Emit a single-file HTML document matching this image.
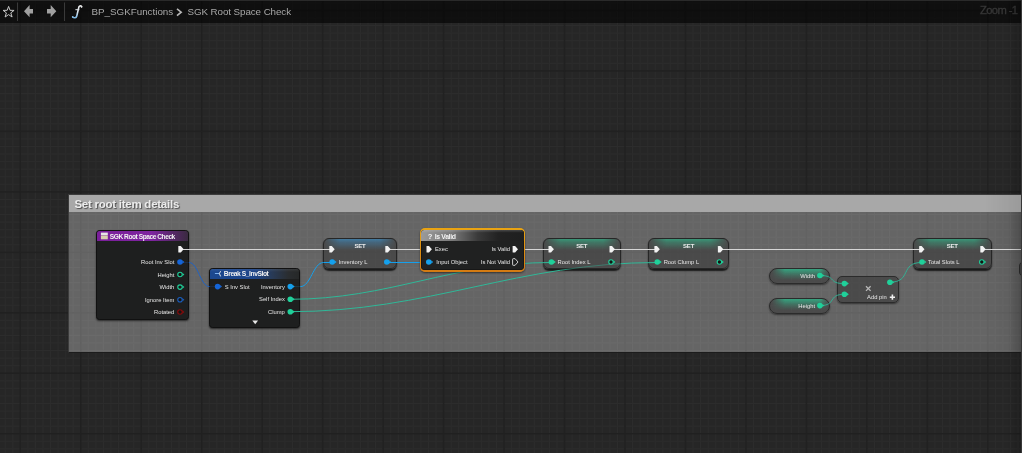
<!DOCTYPE html>
<html><head><meta charset="utf-8">
<style>
*{margin:0;padding:0;box-sizing:border-box}
html,body{width:1022px;height:453px;overflow:hidden}
body{position:relative;will-change:transform;font-family:"Liberation Sans",sans-serif;background:#262626;color:#ddd}
.topbar{position:absolute;left:0;top:0;width:1022px;height:23px;background:rgba(0,0,0,.6);border-top:1px solid #2a2a2a}
.comment{position:absolute;left:68px;top:193.6px;width:970px;height:159px;background:rgba(255,255,255,.295);border:1px solid #3c3c3c;border-bottom-color:#1c1c1c}
.comment .hdr{position:absolute;left:0;top:0;right:0;height:17px;background:#a8a8a8}
.comment .title{position:absolute;left:5.4px;top:3px;letter-spacing:-0.25px;font-size:11.5px;font-weight:bold;color:#ececec;text-shadow:1px 1px 1px rgba(0,0,0,.55);white-space:nowrap}
.b{position:absolute}
.t{position:absolute;white-space:nowrap;line-height:1}
</style></head><body>
<svg width="1022" height="453" style="position:absolute;left:0;top:0"><rect x="4.58" y="0" width="1.2" height="453" fill="#2c2c2c"/><rect x="12.14" y="0" width="1.2" height="453" fill="#2c2c2c"/><rect x="27.26" y="0" width="1.2" height="453" fill="#2c2c2c"/><rect x="34.82" y="0" width="1.2" height="453" fill="#2c2c2c"/><rect x="42.38" y="0" width="1.2" height="453" fill="#2c2c2c"/><rect x="49.93" y="0" width="1.2" height="453" fill="#2c2c2c"/><rect x="57.49" y="0" width="1.2" height="453" fill="#2c2c2c"/><rect x="65.05" y="0" width="1.2" height="453" fill="#2c2c2c"/><rect x="72.61" y="0" width="1.2" height="453" fill="#2c2c2c"/><rect x="87.73" y="0" width="1.2" height="453" fill="#2c2c2c"/><rect x="95.29" y="0" width="1.2" height="453" fill="#2c2c2c"/><rect x="102.85" y="0" width="1.2" height="453" fill="#2c2c2c"/><rect x="110.41" y="0" width="1.2" height="453" fill="#2c2c2c"/><rect x="117.96" y="0" width="1.2" height="453" fill="#2c2c2c"/><rect x="125.52" y="0" width="1.2" height="453" fill="#2c2c2c"/><rect x="133.08" y="0" width="1.2" height="453" fill="#2c2c2c"/><rect x="148.2" y="0" width="1.2" height="453" fill="#2c2c2c"/><rect x="155.76" y="0" width="1.2" height="453" fill="#2c2c2c"/><rect x="163.32" y="0" width="1.2" height="453" fill="#2c2c2c"/><rect x="170.88" y="0" width="1.2" height="453" fill="#2c2c2c"/><rect x="178.43" y="0" width="1.2" height="453" fill="#2c2c2c"/><rect x="185.99" y="0" width="1.2" height="453" fill="#2c2c2c"/><rect x="193.55" y="0" width="1.2" height="453" fill="#2c2c2c"/><rect x="208.67" y="0" width="1.2" height="453" fill="#2c2c2c"/><rect x="216.23" y="0" width="1.2" height="453" fill="#2c2c2c"/><rect x="223.79" y="0" width="1.2" height="453" fill="#2c2c2c"/><rect x="231.34" y="0" width="1.2" height="453" fill="#2c2c2c"/><rect x="238.9" y="0" width="1.2" height="453" fill="#2c2c2c"/><rect x="246.46" y="0" width="1.2" height="453" fill="#2c2c2c"/><rect x="254.02" y="0" width="1.2" height="453" fill="#2c2c2c"/><rect x="269.14" y="0" width="1.2" height="453" fill="#2c2c2c"/><rect x="276.7" y="0" width="1.2" height="453" fill="#2c2c2c"/><rect x="284.26" y="0" width="1.2" height="453" fill="#2c2c2c"/><rect x="291.81" y="0" width="1.2" height="453" fill="#2c2c2c"/><rect x="299.37" y="0" width="1.2" height="453" fill="#2c2c2c"/><rect x="306.93" y="0" width="1.2" height="453" fill="#2c2c2c"/><rect x="314.49" y="0" width="1.2" height="453" fill="#2c2c2c"/><rect x="329.61" y="0" width="1.2" height="453" fill="#2c2c2c"/><rect x="337.17" y="0" width="1.2" height="453" fill="#2c2c2c"/><rect x="344.73" y="0" width="1.2" height="453" fill="#2c2c2c"/><rect x="352.28" y="0" width="1.2" height="453" fill="#2c2c2c"/><rect x="359.84" y="0" width="1.2" height="453" fill="#2c2c2c"/><rect x="367.4" y="0" width="1.2" height="453" fill="#2c2c2c"/><rect x="374.96" y="0" width="1.2" height="453" fill="#2c2c2c"/><rect x="390.08" y="0" width="1.2" height="453" fill="#2c2c2c"/><rect x="397.64" y="0" width="1.2" height="453" fill="#2c2c2c"/><rect x="405.2" y="0" width="1.2" height="453" fill="#2c2c2c"/><rect x="412.75" y="0" width="1.2" height="453" fill="#2c2c2c"/><rect x="420.31" y="0" width="1.2" height="453" fill="#2c2c2c"/><rect x="427.87" y="0" width="1.2" height="453" fill="#2c2c2c"/><rect x="435.43" y="0" width="1.2" height="453" fill="#2c2c2c"/><rect x="450.55" y="0" width="1.2" height="453" fill="#2c2c2c"/><rect x="458.11" y="0" width="1.2" height="453" fill="#2c2c2c"/><rect x="465.67" y="0" width="1.2" height="453" fill="#2c2c2c"/><rect x="473.22" y="0" width="1.2" height="453" fill="#2c2c2c"/><rect x="480.78" y="0" width="1.2" height="453" fill="#2c2c2c"/><rect x="488.34" y="0" width="1.2" height="453" fill="#2c2c2c"/><rect x="495.9" y="0" width="1.2" height="453" fill="#2c2c2c"/><rect x="511.02" y="0" width="1.2" height="453" fill="#2c2c2c"/><rect x="518.58" y="0" width="1.2" height="453" fill="#2c2c2c"/><rect x="526.14" y="0" width="1.2" height="453" fill="#2c2c2c"/><rect x="533.69" y="0" width="1.2" height="453" fill="#2c2c2c"/><rect x="541.25" y="0" width="1.2" height="453" fill="#2c2c2c"/><rect x="548.81" y="0" width="1.2" height="453" fill="#2c2c2c"/><rect x="556.37" y="0" width="1.2" height="453" fill="#2c2c2c"/><rect x="571.49" y="0" width="1.2" height="453" fill="#2c2c2c"/><rect x="579.05" y="0" width="1.2" height="453" fill="#2c2c2c"/><rect x="586.61" y="0" width="1.2" height="453" fill="#2c2c2c"/><rect x="594.16" y="0" width="1.2" height="453" fill="#2c2c2c"/><rect x="601.72" y="0" width="1.2" height="453" fill="#2c2c2c"/><rect x="609.28" y="0" width="1.2" height="453" fill="#2c2c2c"/><rect x="616.84" y="0" width="1.2" height="453" fill="#2c2c2c"/><rect x="631.96" y="0" width="1.2" height="453" fill="#2c2c2c"/><rect x="639.52" y="0" width="1.2" height="453" fill="#2c2c2c"/><rect x="647.08" y="0" width="1.2" height="453" fill="#2c2c2c"/><rect x="654.63" y="0" width="1.2" height="453" fill="#2c2c2c"/><rect x="662.19" y="0" width="1.2" height="453" fill="#2c2c2c"/><rect x="669.75" y="0" width="1.2" height="453" fill="#2c2c2c"/><rect x="677.31" y="0" width="1.2" height="453" fill="#2c2c2c"/><rect x="692.43" y="0" width="1.2" height="453" fill="#2c2c2c"/><rect x="699.99" y="0" width="1.2" height="453" fill="#2c2c2c"/><rect x="707.55" y="0" width="1.2" height="453" fill="#2c2c2c"/><rect x="715.1" y="0" width="1.2" height="453" fill="#2c2c2c"/><rect x="722.66" y="0" width="1.2" height="453" fill="#2c2c2c"/><rect x="730.22" y="0" width="1.2" height="453" fill="#2c2c2c"/><rect x="737.78" y="0" width="1.2" height="453" fill="#2c2c2c"/><rect x="752.9" y="0" width="1.2" height="453" fill="#2c2c2c"/><rect x="760.46" y="0" width="1.2" height="453" fill="#2c2c2c"/><rect x="768.02" y="0" width="1.2" height="453" fill="#2c2c2c"/><rect x="775.57" y="0" width="1.2" height="453" fill="#2c2c2c"/><rect x="783.13" y="0" width="1.2" height="453" fill="#2c2c2c"/><rect x="790.69" y="0" width="1.2" height="453" fill="#2c2c2c"/><rect x="798.25" y="0" width="1.2" height="453" fill="#2c2c2c"/><rect x="813.37" y="0" width="1.2" height="453" fill="#2c2c2c"/><rect x="820.93" y="0" width="1.2" height="453" fill="#2c2c2c"/><rect x="828.49" y="0" width="1.2" height="453" fill="#2c2c2c"/><rect x="836.04" y="0" width="1.2" height="453" fill="#2c2c2c"/><rect x="843.6" y="0" width="1.2" height="453" fill="#2c2c2c"/><rect x="851.16" y="0" width="1.2" height="453" fill="#2c2c2c"/><rect x="858.72" y="0" width="1.2" height="453" fill="#2c2c2c"/><rect x="873.84" y="0" width="1.2" height="453" fill="#2c2c2c"/><rect x="881.4" y="0" width="1.2" height="453" fill="#2c2c2c"/><rect x="888.96" y="0" width="1.2" height="453" fill="#2c2c2c"/><rect x="896.51" y="0" width="1.2" height="453" fill="#2c2c2c"/><rect x="904.07" y="0" width="1.2" height="453" fill="#2c2c2c"/><rect x="911.63" y="0" width="1.2" height="453" fill="#2c2c2c"/><rect x="919.19" y="0" width="1.2" height="453" fill="#2c2c2c"/><rect x="934.31" y="0" width="1.2" height="453" fill="#2c2c2c"/><rect x="941.87" y="0" width="1.2" height="453" fill="#2c2c2c"/><rect x="949.43" y="0" width="1.2" height="453" fill="#2c2c2c"/><rect x="956.98" y="0" width="1.2" height="453" fill="#2c2c2c"/><rect x="964.54" y="0" width="1.2" height="453" fill="#2c2c2c"/><rect x="972.1" y="0" width="1.2" height="453" fill="#2c2c2c"/><rect x="979.66" y="0" width="1.2" height="453" fill="#2c2c2c"/><rect x="994.78" y="0" width="1.2" height="453" fill="#2c2c2c"/><rect x="1002.34" y="0" width="1.2" height="453" fill="#2c2c2c"/><rect x="1009.9" y="0" width="1.2" height="453" fill="#2c2c2c"/><rect x="1017.45" y="0" width="1.2" height="453" fill="#2c2c2c"/><rect x="0" y="2.27" width="1022" height="1.2" fill="#2c2c2c"/><rect x="0" y="17.39" width="1022" height="1.2" fill="#2c2c2c"/><rect x="0" y="24.95" width="1022" height="1.2" fill="#2c2c2c"/><rect x="0" y="32.51" width="1022" height="1.2" fill="#2c2c2c"/><rect x="0" y="40.07" width="1022" height="1.2" fill="#2c2c2c"/><rect x="0" y="47.62" width="1022" height="1.2" fill="#2c2c2c"/><rect x="0" y="55.18" width="1022" height="1.2" fill="#2c2c2c"/><rect x="0" y="62.74" width="1022" height="1.2" fill="#2c2c2c"/><rect x="0" y="77.86" width="1022" height="1.2" fill="#2c2c2c"/><rect x="0" y="85.42" width="1022" height="1.2" fill="#2c2c2c"/><rect x="0" y="92.98" width="1022" height="1.2" fill="#2c2c2c"/><rect x="0" y="100.54" width="1022" height="1.2" fill="#2c2c2c"/><rect x="0" y="108.09" width="1022" height="1.2" fill="#2c2c2c"/><rect x="0" y="115.65" width="1022" height="1.2" fill="#2c2c2c"/><rect x="0" y="123.21" width="1022" height="1.2" fill="#2c2c2c"/><rect x="0" y="138.33" width="1022" height="1.2" fill="#2c2c2c"/><rect x="0" y="145.89" width="1022" height="1.2" fill="#2c2c2c"/><rect x="0" y="153.45" width="1022" height="1.2" fill="#2c2c2c"/><rect x="0" y="161.01" width="1022" height="1.2" fill="#2c2c2c"/><rect x="0" y="168.56" width="1022" height="1.2" fill="#2c2c2c"/><rect x="0" y="176.12" width="1022" height="1.2" fill="#2c2c2c"/><rect x="0" y="183.68" width="1022" height="1.2" fill="#2c2c2c"/><rect x="0" y="198.8" width="1022" height="1.2" fill="#2c2c2c"/><rect x="0" y="206.36" width="1022" height="1.2" fill="#2c2c2c"/><rect x="0" y="213.92" width="1022" height="1.2" fill="#2c2c2c"/><rect x="0" y="221.48" width="1022" height="1.2" fill="#2c2c2c"/><rect x="0" y="229.03" width="1022" height="1.2" fill="#2c2c2c"/><rect x="0" y="236.59" width="1022" height="1.2" fill="#2c2c2c"/><rect x="0" y="244.15" width="1022" height="1.2" fill="#2c2c2c"/><rect x="0" y="259.27" width="1022" height="1.2" fill="#2c2c2c"/><rect x="0" y="266.83" width="1022" height="1.2" fill="#2c2c2c"/><rect x="0" y="274.39" width="1022" height="1.2" fill="#2c2c2c"/><rect x="0" y="281.94" width="1022" height="1.2" fill="#2c2c2c"/><rect x="0" y="289.5" width="1022" height="1.2" fill="#2c2c2c"/><rect x="0" y="297.06" width="1022" height="1.2" fill="#2c2c2c"/><rect x="0" y="304.62" width="1022" height="1.2" fill="#2c2c2c"/><rect x="0" y="319.74" width="1022" height="1.2" fill="#2c2c2c"/><rect x="0" y="327.3" width="1022" height="1.2" fill="#2c2c2c"/><rect x="0" y="334.86" width="1022" height="1.2" fill="#2c2c2c"/><rect x="0" y="342.41" width="1022" height="1.2" fill="#2c2c2c"/><rect x="0" y="349.97" width="1022" height="1.2" fill="#2c2c2c"/><rect x="0" y="357.53" width="1022" height="1.2" fill="#2c2c2c"/><rect x="0" y="365.09" width="1022" height="1.2" fill="#2c2c2c"/><rect x="0" y="380.21" width="1022" height="1.2" fill="#2c2c2c"/><rect x="0" y="387.77" width="1022" height="1.2" fill="#2c2c2c"/><rect x="0" y="395.33" width="1022" height="1.2" fill="#2c2c2c"/><rect x="0" y="402.88" width="1022" height="1.2" fill="#2c2c2c"/><rect x="0" y="410.44" width="1022" height="1.2" fill="#2c2c2c"/><rect x="0" y="418" width="1022" height="1.2" fill="#2c2c2c"/><rect x="0" y="425.56" width="1022" height="1.2" fill="#2c2c2c"/><rect x="0" y="440.68" width="1022" height="1.2" fill="#2c2c2c"/><rect x="0" y="448.24" width="1022" height="1.2" fill="#2c2c2c"/><rect x="19.6" y="0" width="1.4" height="453" fill="#212121"/><rect x="80.07" y="0" width="1.4" height="453" fill="#212121"/><rect x="140.54" y="0" width="1.4" height="453" fill="#212121"/><rect x="201.01" y="0" width="1.4" height="453" fill="#212121"/><rect x="261.48" y="0" width="1.4" height="453" fill="#212121"/><rect x="321.95" y="0" width="1.4" height="453" fill="#212121"/><rect x="382.42" y="0" width="1.4" height="453" fill="#212121"/><rect x="442.89" y="0" width="1.4" height="453" fill="#212121"/><rect x="503.36" y="0" width="1.4" height="453" fill="#212121"/><rect x="563.83" y="0" width="1.4" height="453" fill="#212121"/><rect x="624.3" y="0" width="1.4" height="453" fill="#212121"/><rect x="684.77" y="0" width="1.4" height="453" fill="#212121"/><rect x="745.24" y="0" width="1.4" height="453" fill="#212121"/><rect x="805.71" y="0" width="1.4" height="453" fill="#212121"/><rect x="866.18" y="0" width="1.4" height="453" fill="#212121"/><rect x="926.65" y="0" width="1.4" height="453" fill="#212121"/><rect x="987.12" y="0" width="1.4" height="453" fill="#212121"/><rect x="0" y="9.73" width="1022" height="1.4" fill="#212121"/><rect x="0" y="70.2" width="1022" height="1.4" fill="#212121"/><rect x="0" y="130.67" width="1022" height="1.4" fill="#212121"/><rect x="0" y="191.14" width="1022" height="1.4" fill="#212121"/><rect x="0" y="251.61" width="1022" height="1.4" fill="#212121"/><rect x="0" y="312.08" width="1022" height="1.4" fill="#212121"/><rect x="0" y="372.55" width="1022" height="1.4" fill="#212121"/><rect x="0" y="433.02" width="1022" height="1.4" fill="#212121"/></svg>
<div class="topbar"></div>
<svg width="1022" height="24" style="position:absolute;left:0;top:0">
<path d="M8.6 6.4L10 10.3L14.1 10.4L10.8 12.9L12.1 17L8.6 14.6L5.1 17L6.4 12.9L3.1 10.4L7.2 10.3Z" fill="none" stroke="#c8c8c8" stroke-width="1" stroke-linejoin="round"/>
<rect x="17" y="2.5" width="1" height="18.5" fill="#3a3a3a"/>
<rect x="64" y="2.5" width="1" height="18.5" fill="#3a3a3a"/>
<path d="M24 11.3L29.6 5L29.6 9.1L33 9.1L33 13.4L29.6 13.4L29.6 17.3Z" fill="#a0a0a0"/>
<path d="M56.3 11.3L50.7 5L50.7 9.1L47 9.1L47 13.4L50.7 13.4L50.7 17.3Z" fill="#a0a0a0"/>
<defs><linearGradient id="fg" x1="0" y1="0" x2="0" y2="1"><stop offset="0" stop-color="#f4f4f4"/><stop offset="0.6" stop-color="#d8e4ee"/><stop offset="1" stop-color="#6aaee0"/></linearGradient></defs>
</svg>
<svg width="1022" height="24" style="position:absolute;left:0;top:0"><defs><linearGradient id="fg2" x1="0" y1="5" x2="0" y2="18" gradientUnits="userSpaceOnUse"><stop offset="0" stop-color="#f0f0f0"/><stop offset="0.55" stop-color="#dde6ee"/><stop offset="1" stop-color="#7ab8e6"/></linearGradient></defs>
<path d="M81.6 6.9C81.4 5.4 79.6 5.3 78.9 6.9L76.7 16.2C76.3 17.8 74.2 18.3 72.6 17" fill="none" stroke="url(#fg2)" stroke-width="1.6" stroke-linecap="round"/>
<circle cx="81.5" cy="6.6" r="0.9" fill="#e8e8e8"/><circle cx="72.8" cy="16.9" r="0.8" fill="#8cc0e8"/>
<path d="M75.4 9.7H79.4" stroke="#e0e4e8" stroke-width="1"/></svg>
<div class="t" style="left:91.5px;top:7.2px;font-size:9.8px;color:#a8a8a8">BP_SGKFunctions</div>
<svg width="10" height="24" style="position:absolute;left:175px;top:0"><path d="M2 8.8L6.2 12.2L2 15.6" fill="none" stroke="#b8b8b8" stroke-width="1.6"/></svg>
<div class="t" style="left:187.5px;top:7.2px;font-size:9.8px;letter-spacing:-0.08px;color:#a8a8a8">SGK Root Space Check</div>
<div class="t" style="left:980px;top:5.4px;font-size:11.2px;letter-spacing:-0.6px;color:#363636;-webkit-text-stroke:0.35px #363636">Zoom -1</div>
<div class="comment"><div class="hdr"></div><div class="title">Set root item details</div></div>
<div style="position:absolute;left:985px;top:194px;width:36px;height:158px;background:linear-gradient(to right,transparent,rgba(0,0,0,.08))"></div>
<div class="b" style="left:95.8px;top:230px;width:93px;height:89.5px;background:#1e1f1f;border-radius:3.5px;border:1px solid #111;box-shadow:0 1px 2px rgba(0,0,0,.6)"></div>
<div class="b" style="left:96.8px;top:231px;width:91px;height:10.3px;background:linear-gradient(to right,#7a1f9a 0%,#7e24a0 60%,#3a2a40 100%);border-radius:2.5px 2.5px 0 0"></div>
<div class="b" style="left:209.2px;top:267.6px;width:91px;height:60.9px;background:#1e1f1f;border-radius:3.5px;border:1px solid #111;box-shadow:0 1px 2px rgba(0,0,0,.6)"></div>
<div class="b" style="left:210.2px;top:268.6px;width:89px;height:10.3px;background:linear-gradient(to bottom,rgba(255,255,255,.08) 0%,transparent 30%),linear-gradient(to right,#1b4890 0%,#1d4488 50%,#283a56 70%,#2a2d30 88%,#262828 100%);border-radius:2.5px 2.5px 0 0"></div>
<div class="b" style="left:323.3px;top:237.5px;width:73.4px;height:31.6px;background:rgba(56,56,56,.6);border-radius:6px;border:1px solid #262626;box-shadow:0 1.2px 1.5px rgba(0,0,0,.75)"></div>
<div class="b" style="left:324.3px;top:238.5px;width:71.4px;height:11px;background:linear-gradient(to bottom,#3d9ad8 0%,#3d9ad899 30%,transparent 100%);-webkit-mask-image:linear-gradient(to right,transparent 0%,#000 22%,#000 78%,transparent 100%);border-radius:5px 5px 0 0;opacity:.6"></div>
<div class="b" style="left:542.5px;top:237.5px;width:78.5px;height:31.6px;background:rgba(56,56,56,.6);border-radius:6px;border:1px solid #262626;box-shadow:0 1.2px 1.5px rgba(0,0,0,.75)"></div>
<div class="b" style="left:543.5px;top:238.5px;width:76.5px;height:11px;background:linear-gradient(to bottom,#2fc896 0%,#2fc89699 30%,transparent 100%);-webkit-mask-image:linear-gradient(to right,transparent 0%,#000 22%,#000 78%,transparent 100%);border-radius:5px 5px 0 0;opacity:.6"></div>
<div class="b" style="left:648px;top:237.5px;width:81.2px;height:31.6px;background:rgba(56,56,56,.6);border-radius:6px;border:1px solid #262626;box-shadow:0 1.2px 1.5px rgba(0,0,0,.75)"></div>
<div class="b" style="left:649px;top:238.5px;width:79.2px;height:11px;background:linear-gradient(to bottom,#2fc896 0%,#2fc89699 30%,transparent 100%);-webkit-mask-image:linear-gradient(to right,transparent 0%,#000 22%,#000 78%,transparent 100%);border-radius:5px 5px 0 0;opacity:.6"></div>
<div class="b" style="left:912.6px;top:238px;width:79.4px;height:31.3px;background:rgba(56,56,56,.6);border-radius:6px;border:1px solid #262626;box-shadow:0 1.2px 1.5px rgba(0,0,0,.75)"></div>
<div class="b" style="left:913.6px;top:239px;width:77.4px;height:11px;background:linear-gradient(to bottom,#2fc896 0%,#2fc89699 30%,transparent 100%);-webkit-mask-image:linear-gradient(to right,transparent 0%,#000 22%,#000 78%,transparent 100%);border-radius:5px 5px 0 0;opacity:.6"></div>
<div class="b" style="left:769.1px;top:267.5px;width:61.4px;height:16.1px;background:rgba(56,56,56,.6);border-radius:8px;border:1px solid #2b2b2b;box-shadow:0 1px 2px rgba(0,0,0,.5)"></div>
<div class="b" style="left:770.1px;top:268.5px;width:59.4px;height:14.1px;background:linear-gradient(to bottom,rgba(47,200,150,.7) 0%,rgba(47,200,150,.25) 45%,transparent 80%);-webkit-mask-image:linear-gradient(to right,transparent 3%,#000 25%,#000 85%,transparent 100%);border-radius:7px"></div>
<div class="b" style="left:769.1px;top:298.3px;width:61.4px;height:15.5px;background:rgba(56,56,56,.6);border-radius:8px;border:1px solid #2b2b2b;box-shadow:0 1px 2px rgba(0,0,0,.5)"></div>
<div class="b" style="left:770.1px;top:299.3px;width:59.4px;height:13.5px;background:linear-gradient(to bottom,rgba(47,200,150,.7) 0%,rgba(47,200,150,.25) 45%,transparent 80%);-webkit-mask-image:linear-gradient(to right,transparent 3%,#000 25%,#000 85%,transparent 100%);border-radius:7px"></div>
<div class="b" style="left:837.4px;top:275.5px;width:61.8px;height:27.3px;background:rgba(56,56,56,.6);border-radius:5px;border:1px solid #2b2b2b;box-shadow:0 1px 2px rgba(0,0,0,.5)"></div>
<div class="b" style="left:1018.5px;top:261px;width:21.5px;height:15.5px;background:rgba(56,56,56,.6);border-radius:5px;border:1px solid #2b2b2b"></div>
<svg width="1022" height="453" style="position:absolute;left:0;top:0"><defs><mask id="m2" maskUnits="userSpaceOnUse" x="0" y="0" width="1022" height="453"><rect x="0" y="0" width="1022" height="453" fill="#fff"/><rect x="542.5" y="237.5" width="78.5" height="32" rx="6" fill="#707070"/></mask></defs><path d="M181 249.5H332" stroke="#d6d6d6" stroke-width="1"/><path d="M388 249.5H429" stroke="#d6d6d6" stroke-width="1"/><path d="M515 249.5H551" stroke="#d6d6d6" stroke-width="1"/><path d="M612 249.5H657" stroke="#d6d6d6" stroke-width="1"/><path d="M720 249.5H922" stroke="#d6d6d6" stroke-width="1"/><path d="M983 249.5H1030" stroke="#d6d6d6" stroke-width="1"/><path d="M189 262.5C198.22 262.5 200.28 286.6 209.5 286.6" stroke="#1f62c4" stroke-width="1.0" fill="none" opacity="1.0"/><path d="M300.4 286.6C310.79 286.6 313.11 262.5 323.5 262.5" stroke="#15a0ec" stroke-width="1.0" fill="none" opacity="1.0"/><path d="M323.5 262.5H332" stroke="#15a0ec" stroke-width="1"/><path d="M387.7 262.5C401.47 262.5 415.23 262.5 429 262.5" stroke="#15a0ec" stroke-width="1.0" fill="none" opacity="1.0"/><path d="M290 299.3C389.27 299.3 451.73 262.5 551 262.5" stroke="#2fb898" stroke-width="1.0" fill="none" opacity="1.0"/><path d="M290 311.7C428.73 311.7 518.27 262.5 657 262.5" stroke="#2fb898" stroke-width="1.0" fill="none" opacity="1.0" mask="url(#m2)"/><path d="M819.9 275.5C837.05 275.5 827.25 283.6 844.4 283.6" stroke="#2fb898" stroke-width="0.9" fill="none" opacity="1.0"/><path d="M819.9 305.6C837.05 305.6 827.25 294.3 844.4 294.3" stroke="#2fb898" stroke-width="0.9" fill="none" opacity="1.0"/><path d="M889.9 282.2C912.23 282.2 899.47 262.5 921.8 262.5" stroke="#2fb898" stroke-width="0.9" fill="none" opacity="1.0"/></svg>
<div class="b" style="left:420px;top:228.4px;width:105px;height:43.4px;background:linear-gradient(to bottom,#eaa412,#d47a12);border-radius:5px;box-shadow:0 1px 2px rgba(0,0,0,.5)"></div>
<div class="b" style="left:421.3px;top:229.7px;width:102.4px;height:40.8px;background:#202121;border-radius:4px;box-shadow:inset 0 0 0 0.5px #0e0e0e"></div>
<div class="b" style="left:421.3px;top:229.7px;width:102.4px;height:11.5px;background:linear-gradient(to bottom,rgba(255,255,255,.18) 0%,transparent 25%),linear-gradient(to right,#9a9a9a 0%,#7a7a7a 30%,#3a3a3a 55%,#222 75%,#1e1f1f 100%);border-radius:3.5px 3.5px 0 0"></div>
<div class="t" style="left:109.8px;top:233.96px;font-size:6.6px;font-weight:bold;color:#f2f2f2;letter-spacing:-0.45px">SGK Root Space Check</div>
<div class="t" style="right:847.7px;top:260.08px;font-size:5.8px;font-weight:normal;color:#e6e6e6;">Root Inv Slot</div>
<div class="t" style="right:847.7px;top:272.58px;font-size:5.8px;font-weight:normal;color:#e6e6e6;">Height</div>
<div class="t" style="right:847.7px;top:285.18px;font-size:5.8px;font-weight:normal;color:#e6e6e6;">Width</div>
<div class="t" style="right:847.7px;top:297.78px;font-size:5.8px;font-weight:normal;color:#e6e6e6;">Ignore Item</div>
<div class="t" style="right:847.7px;top:310.08px;font-size:5.8px;font-weight:normal;color:#e6e6e6;">Rotated</div>
<div class="t" style="left:223.8px;top:271.07px;font-size:6.7px;font-weight:bold;color:#f2f2f2;letter-spacing:-0.42px">Break S_InvSlot</div>
<div class="t" style="left:224.8px;top:284.68px;font-size:5.8px;font-weight:normal;color:#e6e6e6;">S Inv Slot</div>
<div class="t" style="right:737.2px;top:284.68px;font-size:5.8px;font-weight:normal;color:#e6e6e6;">Inventory</div>
<div class="t" style="right:737.2px;top:297.38px;font-size:5.8px;font-weight:normal;color:#e6e6e6;">Self Index</div>
<div class="t" style="right:737.2px;top:309.78px;font-size:5.8px;font-weight:normal;color:#e6e6e6;">Clump</div>
<div class="t" style="left:310px;width:100px;text-align:center;top:243.2px;font-size:6.0px;font-weight:bold;color:#ececec;letter-spacing:-0.2px">SET</div>
<div class="t" style="left:338.7px;top:260.08px;font-size:5.8px;font-weight:normal;color:#e6e6e6;">Inventory L</div>
<div class="t" style="left:531.75px;width:100px;text-align:center;top:243.2px;font-size:6.0px;font-weight:bold;color:#ececec;letter-spacing:-0.2px">SET</div>
<div class="t" style="left:557.6px;top:260.08px;font-size:5.8px;font-weight:normal;color:#e6e6e6;">Root Index L</div>
<div class="t" style="left:638.6px;width:100px;text-align:center;top:243.2px;font-size:6.0px;font-weight:bold;color:#ececec;letter-spacing:-0.2px">SET</div>
<div class="t" style="left:663.7px;top:260.08px;font-size:5.8px;font-weight:normal;color:#e6e6e6;">Root Clump L</div>
<div class="t" style="left:902.3px;width:100px;text-align:center;top:243.2px;font-size:6.0px;font-weight:bold;color:#ececec;letter-spacing:-0.2px">SET</div>
<div class="t" style="left:928px;top:260.08px;font-size:5.8px;font-weight:normal;color:#e6e6e6;">Total Slots L</div>
<div class="t" style="left:427.7px;top:233.26px;font-size:7.6px;font-weight:bold;color:#f2f2f2;">?</div>
<div class="t" style="left:434.8px;top:233.89px;font-size:6.9px;font-weight:bold;color:#f2f2f2;letter-spacing:-0.38px">Is Valid</div>
<div class="t" style="left:435px;top:247.28px;font-size:5.8px;font-weight:normal;color:#e6e6e6;">Exec</div>
<div class="t" style="right:512px;top:247.28px;font-size:5.8px;font-weight:normal;color:#e6e6e6;">Is Valid</div>
<div class="t" style="left:436.3px;top:260.08px;font-size:5.8px;font-weight:normal;color:#e6e6e6;">Input Object</div>
<div class="t" style="right:512px;top:260.08px;font-size:5.8px;font-weight:normal;color:#e6e6e6;">Is Not Valid</div>
<div class="t" style="right:207px;top:273.58px;font-size:5.8px;font-weight:normal;color:#e6e6e6;">Width</div>
<div class="t" style="right:207px;top:303.68px;font-size:5.8px;font-weight:normal;color:#e6e6e6;">Height</div>
<div class="t" style="left:867.1px;top:295.18px;font-size:5.8px;font-weight:normal;color:#e6e6e6;">Add pin</div>
<svg width="1022" height="453" style="position:absolute;left:0;top:0"><path d="M180 262.5H189M209.5 286.6H217.6" stroke="#1f62c4" stroke-width="1" opacity=".2"/><path d="M290.3 286.6H300.4" stroke="#15a0ec" stroke-width="1" opacity=".2"/><rect x="100.9" y="232.6" width="6.9" height="2.5" fill="#e6e6e6"/><rect x="100.9" y="235.4" width="6.9" height="3.9" fill="#d6cfae"/><path d="M178.9 246L180.8 246L183.7 249.3L180.8 252.6L178.9 252.6Q178.3 252.6 178.3 252L178.3 246.6Q178.3 246 178.9 246Z" fill="#f2f2f2"/><circle cx="180" cy="262" r="2.8" fill="#1565d8"/><path d="M182.5 260.5L184.4 262L182.5 263.5Z" fill="#1565d8"/><path d="M182.5 273L184.4 274.5L182.5 276Z" fill="#20d09a"/><circle cx="180" cy="274.5" r="2.25" fill="#151515" stroke="#20d09a" stroke-width="1.1"/><path d="M182.5 285.6L184.4 287.1L182.5 288.6Z" fill="#20d09a"/><circle cx="180" cy="287.1" r="2.25" fill="#151515" stroke="#20d09a" stroke-width="1.1"/><path d="M182.5 298.2L184.4 299.7L182.5 301.2Z" fill="#1a5fc0"/><circle cx="180" cy="299.7" r="2.25" fill="#151515" stroke="#1a5fc0" stroke-width="1.1"/><path d="M182.5 310.5L184.4 312L182.5 313.5Z" fill="#8c0a0a"/><circle cx="180" cy="312" r="2.25" fill="#151515" stroke="#8c0a0a" stroke-width="1.1"/><path d="M214.9 273.5H219.3" stroke="#7ab0f0" stroke-width="1"/><path d="M219.4 273.5L220.6 271.2M219.4 273.5L220.6 276.4" stroke="#e8e8e8" stroke-width="1"/><circle cx="217.6" cy="286.6" r="2.8" fill="#1565d8"/><path d="M220.1 285.1L222 286.6L220.1 288.1Z" fill="#1565d8"/><circle cx="290.3" cy="286.6" r="2.8" fill="#15a0ec"/><path d="M292.8 285.1L294.7 286.6L292.8 288.1Z" fill="#15a0ec"/><circle cx="290.3" cy="299.3" r="2.8" fill="#20d09a"/><path d="M292.8 297.8L294.7 299.3L292.8 300.8Z" fill="#20d09a"/><circle cx="290.3" cy="311.7" r="2.8" fill="#20d09a"/><path d="M292.8 310.2L294.7 311.7L292.8 313.2Z" fill="#20d09a"/><path d="M252.3 320.6L258.1 320.6L255.2 324.3Z" fill="#e8e8e8"/><path d="M329.9 246L331.8 246L334.7 249.3L331.8 252.6L329.9 252.6Q329.3 252.6 329.3 252L329.3 246.6Q329.3 246 329.9 246Z" fill="#f2f2f2"/><path d="M385.9 246L387.8 246L390.7 249.3L387.8 252.6L385.9 252.6Q385.3 252.6 385.3 252L385.3 246.6Q385.3 246 385.9 246Z" fill="#f2f2f2"/><circle cx="332.2" cy="262" r="2.8" fill="#15a0ec"/><path d="M334.7 260.5L336.6 262L334.7 263.5Z" fill="#15a0ec"/><circle cx="386.8" cy="262" r="2.8" fill="#15a0ec"/><path d="M389.3 260.5L391.2 262L389.3 263.5Z" fill="#15a0ec"/><path d="M549.1 246L551 246L553.9 249.3L551 252.6L549.1 252.6Q548.5 252.6 548.5 252L548.5 246.6Q548.5 246 549.1 246Z" fill="#f2f2f2"/><path d="M610.1 246L612 246L614.9 249.3L612 252.6L610.1 252.6Q609.5 252.6 609.5 252L609.5 246.6Q609.5 246 610.1 246Z" fill="#f2f2f2"/><circle cx="551.4" cy="262" r="2.8" fill="#20d09a"/><path d="M553.9 260.5L555.8 262L553.9 263.5Z" fill="#20d09a"/><path d="M613.5 260.5L615.4 262L613.5 263.5Z" fill="#20d09a"/><circle cx="611" cy="262" r="2.25" fill="#151515" stroke="#20d09a" stroke-width="1.1"/><path d="M655 246L656.9 246L659.8 249.3L656.9 252.6L655 252.6Q654.4 252.6 654.4 252L654.4 246.6Q654.4 246 655 246Z" fill="#f2f2f2"/><path d="M718.5 246L720.4 246L723.3 249.3L720.4 252.6L718.5 252.6Q717.9 252.6 717.9 252L717.9 246.6Q717.9 246 718.5 246Z" fill="#f2f2f2"/><circle cx="657.3" cy="262" r="2.8" fill="#20d09a"/><path d="M659.8 260.5L661.7 262L659.8 263.5Z" fill="#20d09a"/><path d="M721.9 260.5L723.8 262L721.9 263.5Z" fill="#20d09a"/><circle cx="719.4" cy="262" r="2.25" fill="#151515" stroke="#20d09a" stroke-width="1.1"/><path d="M919.7 246L921.6 246L924.5 249.3L921.6 252.6L919.7 252.6Q919.1 252.6 919.1 252L919.1 246.6Q919.1 246 919.7 246Z" fill="#f2f2f2"/><path d="M980.9 246L982.8 246L985.7 249.3L982.8 252.6L980.9 252.6Q980.3 252.6 980.3 252L980.3 246.6Q980.3 246 980.9 246Z" fill="#f2f2f2"/><circle cx="922" cy="262" r="2.8" fill="#20d09a"/><path d="M924.5 260.5L926.4 262L924.5 263.5Z" fill="#20d09a"/><path d="M984.3 260.5L986.2 262L984.3 263.5Z" fill="#20d09a"/><circle cx="981.8" cy="262" r="2.25" fill="#151515" stroke="#20d09a" stroke-width="1.1"/><path d="M427.1 245.9L429 245.9L431.9 249.2L429 252.5L427.1 252.5Q426.5 252.5 426.5 251.9L426.5 246.5Q426.5 245.9 427.1 245.9Z" fill="#f2f2f2"/><path d="M513.2 245.9L515.1 245.9L518 249.2L515.1 252.5L513.2 252.5Q512.6 252.5 512.6 251.9L512.6 246.5Q512.6 245.9 513.2 245.9Z" fill="#f2f2f2"/><circle cx="428.8" cy="262" r="2.8" fill="#15a0ec"/><path d="M431.3 260.5L433.2 262L431.3 263.5Z" fill="#15a0ec"/><path d="M513.2 258.7L515.1 258.7L518 262L515.1 265.3L513.2 265.3Q512.6 265.3 512.6 264.7L512.6 259.3Q512.6 258.7 513.2 258.7Z" fill="none" stroke="#e0e0e0" stroke-width="0.9"/><circle cx="819.9" cy="275.5" r="2.8" fill="#20d09a"/><path d="M822.4 274L824.3 275.5L822.4 277Z" fill="#20d09a"/><circle cx="819.9" cy="305.6" r="2.8" fill="#20d09a"/><path d="M822.4 304.1L824.3 305.6L822.4 307.1Z" fill="#20d09a"/><circle cx="844.4" cy="283.6" r="2.8" fill="#20d09a"/><path d="M846.9 282.1L848.8 283.6L846.9 285.1Z" fill="#20d09a"/><circle cx="844.4" cy="294.3" r="2.8" fill="#20d09a"/><path d="M846.9 292.8L848.8 294.3L846.9 295.8Z" fill="#20d09a"/><circle cx="889.9" cy="282.2" r="2.8" fill="#20d09a"/><path d="M892.4 280.7L894.3 282.2L892.4 283.7Z" fill="#20d09a"/><path d="M866 286.3L870.6 290.9M870.6 286.3L866 290.9" stroke="#b8b8b8" stroke-width="1.3"/><path d="M891.6 294.6h1.6v1.8h1.8v1.6h-1.8v1.8h-1.6v-1.8h-1.8v-1.6h1.8z" fill="#f0f0f0"/></svg>
<div style="position:absolute;left:1008px;top:0;width:13px;height:194px;background:linear-gradient(to right,transparent,rgba(0,0,0,.18))"></div><div style="position:absolute;left:1008px;top:212px;width:13px;height:241px;background:linear-gradient(to right,transparent,rgba(0,0,0,.18))"></div>
<div style="position:absolute;left:1021px;top:0;width:1px;height:453px;background:#383838"></div>
</body></html>
